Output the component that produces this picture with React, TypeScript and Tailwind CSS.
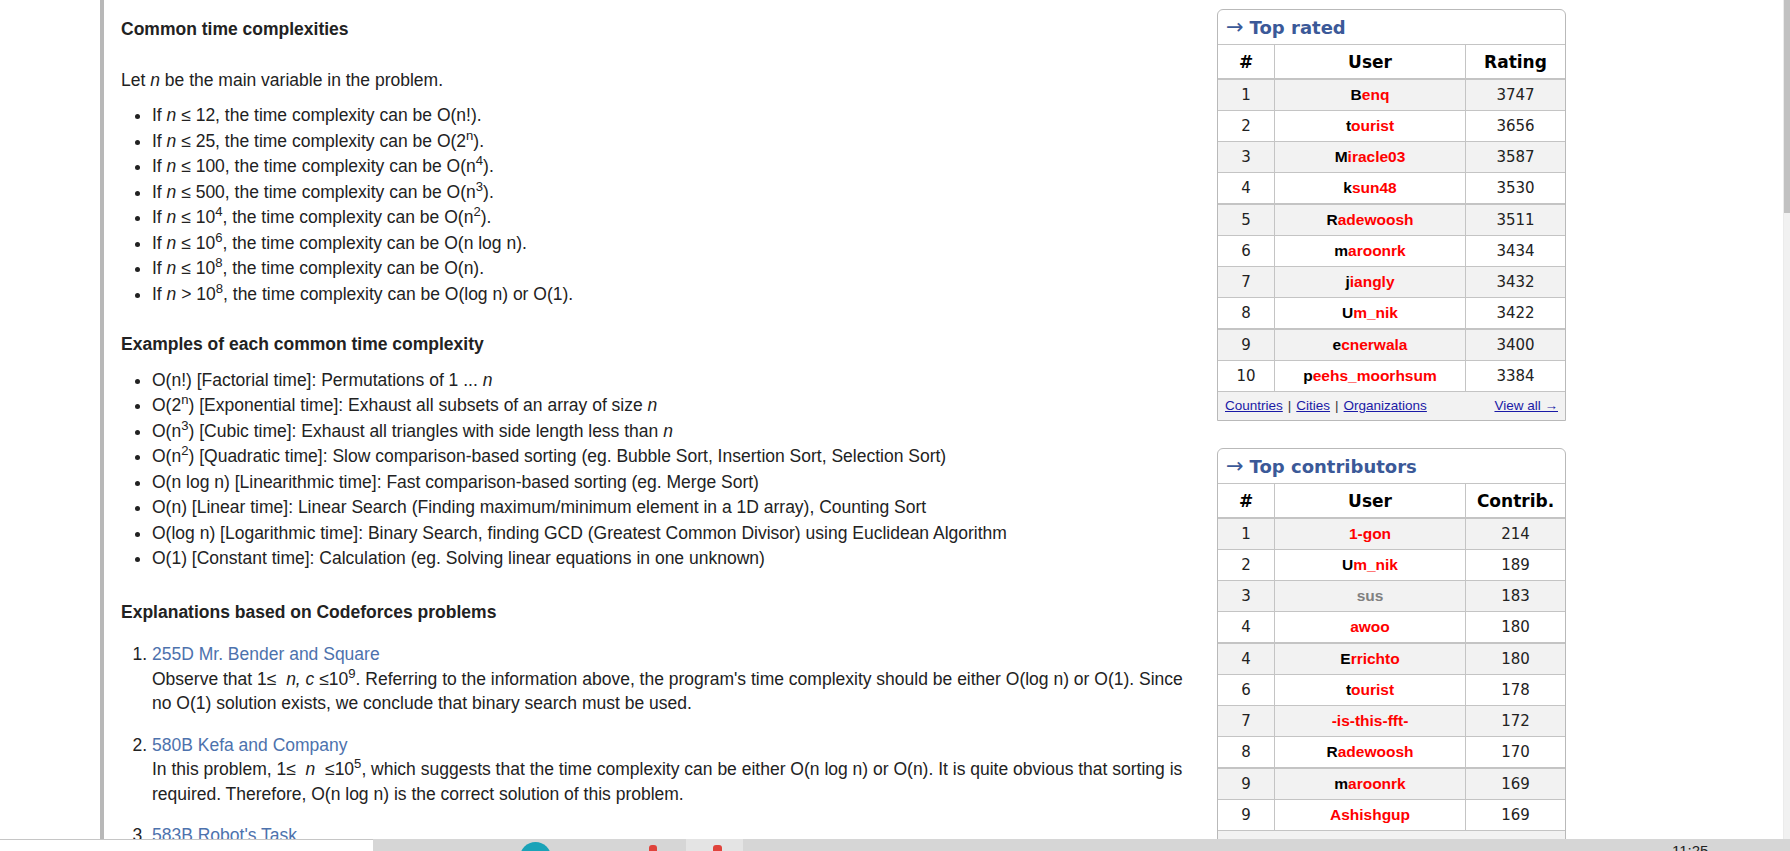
import React from "react";

type Kind = "lgm" | "red" | "gray";
type Row = { rank: number; name: string; kind: Kind; value: number };

const topRated: Row[] = [
  { rank: 1, name: "Benq", kind: "lgm", value: 3747 },
  { rank: 2, name: "tourist", kind: "lgm", value: 3656 },
  { rank: 3, name: "Miracle03", kind: "lgm", value: 3587 },
  { rank: 4, name: "ksun48", kind: "lgm", value: 3530 },
  { rank: 5, name: "Radewoosh", kind: "lgm", value: 3511 },
  { rank: 6, name: "maroonrk", kind: "lgm", value: 3434 },
  { rank: 7, name: "jiangly", kind: "lgm", value: 3432 },
  { rank: 8, name: "Um_nik", kind: "lgm", value: 3422 },
  { rank: 9, name: "ecnerwala", kind: "lgm", value: 3400 },
  { rank: 10, name: "peehs_moorhsum", kind: "lgm", value: 3384 },
];

const topContrib: Row[] = [
  { rank: 1, name: "1-gon", kind: "red", value: 214 },
  { rank: 2, name: "Um_nik", kind: "lgm", value: 189 },
  { rank: 3, name: "sus", kind: "gray", value: 183 },
  { rank: 4, name: "awoo", kind: "red", value: 180 },
  { rank: 4, name: "Errichto", kind: "lgm", value: 180 },
  { rank: 6, name: "tourist", kind: "lgm", value: 178 },
  { rank: 7, name: "-is-this-fft-", kind: "red", value: 172 },
  { rank: 8, name: "Radewoosh", kind: "lgm", value: 170 },
  { rank: 9, name: "maroonrk", kind: "lgm", value: 169 },
  { rank: 9, name: "Ashishgup", kind: "red", value: 169 },
];

function Handle({ name, kind }: { name: string; kind: Kind }) {
  if (kind === "gray") return <span className="text-[#808080]">{name}</span>;
  if (kind === "red") return <span className="text-[#ff0000]">{name}</span>;
  return (
    <>
      <span className="text-black">{name[0]}</span>
      <span className="text-[#ff0000]">{name.slice(1)}</span>
    </>
  );
}

function RankBox({
  title,
  valueLabel,
  rows,
  links,
}: {
  title: string;
  valueLabel: string;
  rows: Row[];
  links: string[];
}) {
  return (
    <div className="w-[349px] shrink-0 bg-white border border-[#b9b9b9] rounded-t-[6px] overflow-hidden font-['DejaVu_Sans',Verdana,sans-serif]">
      {/* box title */}
      <div className="h-[34px] flex items-center pl-[8px] text-[#3b5998]">
        <span className="text-[21px] leading-none">→</span>
        <span className="ml-[6px] text-[18px] font-bold">{title}</span>
      </div>
      {/* header */}
      <div className="flex h-[36px] pt-[3px] border-t border-b-2 border-[#c4c4c4] text-[17px] font-bold text-black">
        <div className="w-[57px] flex items-center justify-center border-r border-[#c4c4c4] -mt-[3px] pt-[3px]">#</div>
        <div className="w-[191px] flex items-center justify-center border-r border-[#c4c4c4] -mt-[3px] pt-[3px]">User</div>
        <div className="flex-1 flex items-center justify-center">{valueLabel}</div>
      </div>
      {rows.map((r, i) => {
        const thick = i === 3 || i === 7;
        return (
          <div
            key={i}
            className={`flex text-[15px] text-[#222] ${thick ? "h-[32px] border-b-2" : "h-[31px] border-b"} border-[#c4c4c4] ${i % 2 === 0 ? "bg-[#f2f2f2]" : "bg-white"}`}
          >
            <div className="w-[57px] flex items-center justify-center border-r border-[#c4c4c4]">{r.rank}</div>
            <div className="w-[191px] flex items-center justify-center border-r border-[#c4c4c4] font-['Liberation_Sans',Arial,sans-serif] font-bold text-[15.5px]">
              <Handle name={r.name} kind={r.kind} />
            </div>
            <div className="flex-1 flex items-center justify-center">{r.value}</div>
          </div>
        );
      })}
      {/* footer */}
      <div className="h-[28px] bg-[#f2f2f2] flex items-center justify-between px-[7px] font-['Liberation_Sans',Arial,sans-serif] text-[13.5px] leading-none text-[#333]">
        <div className="flex items-center gap-[5px]">
          {links.map((l, i) => (
            <React.Fragment key={l}>
              {i > 0 && <span>|</span>}
              <a className="text-[#1a1aa6] underline">{l}</a>
            </React.Fragment>
          ))}
        </div>
        <a className="text-[#1a1aa6] underline">View all →</a>
      </div>
    </div>
  );
}

const N = () => <i>n</i>;

export default function App() {
  return (
    <div className="w-[1790px] h-[851px] flex flex-col overflow-hidden bg-white">
      <div className="flex-1 flex min-h-0 overflow-hidden">
        {/* blog content */}
        <div className="ml-[100px] w-[1100px] shrink-0 border-l-4 border-[#b8b8b8] pl-[17px] pt-[17px] text-[17.5px] leading-[25.5px] text-[#222] font-['Liberation_Sans',Arial,Helvetica,sans-serif]">
          <h3 className="font-bold">Common time complexities</h3>
          <p className="mt-[25px]">
            Let <N /> be the main variable in the problem.
          </p>
          <ul className="mt-[10px] list-disc pl-[31px]">
            <li>If <N /> ≤ 12, the time complexity can be O(n!).</li>
            <li>If <N /> ≤ 25, the time complexity can be O(2<sup>n</sup>).</li>
            <li>If <N /> ≤ 100, the time complexity can be O(n<sup>4</sup>).</li>
            <li>If <N /> ≤ 500, the time complexity can be O(n<sup>3</sup>).</li>
            <li>If <N /> ≤ 10<sup>4</sup>, the time complexity can be O(n<sup>2</sup>).</li>
            <li>If <N /> ≤ 10<sup>6</sup>, the time complexity can be O(n log n).</li>
            <li>If <N /> ≤ 10<sup>8</sup>, the time complexity can be O(n).</li>
            <li>If <N /> &gt; 10<sup>8</sup>, the time complexity can be O(log n) or O(1).</li>
          </ul>

          <h3 className="mt-[25px] font-bold">Examples of each common time complexity</h3>
          <ul className="mt-[10px] list-disc pl-[31px]">
            <li>O(n!) [Factorial time]: Permutations of 1 ... <N /></li>
            <li>O(2<sup>n</sup>) [Exponential time]: Exhaust all subsets of an array of size <N /></li>
            <li>O(n<sup>3</sup>) [Cubic time]: Exhaust all triangles with side length less than <N /></li>
            <li>O(n<sup>2</sup>) [Quadratic time]: Slow comparison-based sorting (eg. Bubble Sort, Insertion Sort, Selection Sort)</li>
            <li>O(n log n) [Linearithmic time]: Fast comparison-based sorting (eg. Merge Sort)</li>
            <li>O(n) [Linear time]: Linear Search (Finding maximum/minimum element in a 1D array), Counting Sort</li>
            <li>O(log n) [Logarithmic time]: Binary Search, finding GCD (Greatest Common Divisor) using Euclidean Algorithm</li>
            <li>O(1) [Constant time]: Calculation (eg. Solving linear equations in one unknown)</li>
          </ul>

          <h3 className="mt-[28px] font-bold">Explanations based on Codeforces problems</h3>
          <ol className="mt-[17px] list-decimal pl-[31px] leading-[24.5px] flex flex-col gap-[17px]">
            <li>
              <a className="text-[#4d72ad]">255D Mr. Bender and Square</a>
              <br />
              Observe that 1≤&nbsp; <i>n, c</i> ≤10<sup>9</sup>. Referring to the information above, the program's time complexity should be either O(log n) or O(1). Since no O(1) solution exists, we conclude that binary search must be used.
            </li>
            <li>
              <a className="text-[#4d72ad]">580B Kefa and Company</a>
              <br />
              In this problem, 1≤&nbsp; <i>n</i>&nbsp; ≤10<sup>5</sup>, which suggests that the time complexity can be either O(n log n) or O(n). It is quite obvious that sorting is required. Therefore, O(n log n) is the correct solution of this problem.
            </li>
            <li>
              <a className="text-[#4d72ad]">583B Robot's Task</a>
            </li>
          </ol>
        </div>

        {/* sidebar */}
        <div className="ml-[17px] pt-[9px] flex flex-col gap-[27px] shrink-0">
          <RankBox title="Top rated" valueLabel="Rating" rows={topRated} links={["Countries", "Cities", "Organizations"]} />
          <RankBox title="Top contributors" valueLabel="Contrib." rows={topContrib} links={[]} />
        </div>

        <div className="flex-1" />
        {/* page scrollbar */}
        <div className="w-[7px] bg-[#f1f1f1] border-l border-[#ebebeb] flex flex-col">
          <div className="h-[213px] bg-[#c1c1c1]" />
        </div>
      </div>

      {/* OS taskbar peeking in at the bottom */}
      <div className="h-[12px] flex shrink-0 overflow-hidden bg-[#d6d6d6]">
        <div className="w-[373px] bg-white border-t border-[#c6c6c6]" />
        <div className="ml-[147px] mt-[3px] w-[31px] h-[31px] rounded-full bg-[#1aa3b8]" />
        <div className="ml-[98px] mt-[6px] w-[8px] h-[10px] rounded-t-[3px] bg-[#e0433b]" />
        <div className="ml-[29px] w-[57px] bg-[#e4e4e4] flex justify-center">
          <div className="ml-[6px] mt-[6px] w-[9px] h-[10px] rounded-t-[3px] bg-[#e0433b]" />
        </div>
        <div className="ml-[929px] mt-[4px] text-[15px] leading-[15px] text-[#222] font-['Liberation_Sans',Arial,sans-serif]">11:25</div>
      </div>
    </div>
  );
}
